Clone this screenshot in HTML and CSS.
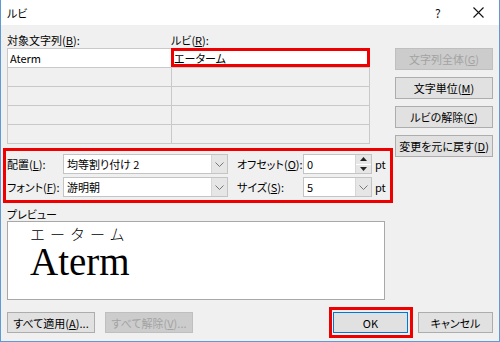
FILE: index.html
```html
<!DOCTYPE html>
<html lang="ja">
<head>
<meta charset="utf-8">
<link rel="stylesheet" href="styles.css">
</head>
<body>
<div class="window">
  <div class="titlebar">
    <span class="title">ルビ</span>
    <span class="help">?</span>
    <span class="close"><svg width="11" height="11" viewBox="0 0 11 11"><path d="M0.5 0.5 L10.5 10.5 M10.5 0.5 L0.5 10.5" stroke="#111" stroke-width="1.1" fill="none"/></svg></span>
  </div>
  <div class="body">
    <div class="main">
      <div class="left">
        <div class="col-labels"><span>対象文字列(<u>B</u>):</span><span>ルビ(<u>R</u>):</span></div>
        <div class="ruby-grid">
          <div class="cell first">Aterm</div><div class="cell first hl">エーターム</div>
          <div class="cell"></div><div class="cell"></div>
          <div class="cell"></div><div class="cell"></div>
          <div class="cell"></div><div class="cell"></div>
          <div class="cell"></div><div class="cell"></div>
        </div>
        <div class="settings">
          <span class="lbl">配置(<u>L</u>):</span>
          <div class="combo"><span class="val">均等割り付け 2</span><span class="drop"><svg width="9" height="5" viewBox="0 0 9 5"><path d="M0.5 0.5 L4.5 4.5 L8.5 0.5" stroke="#777" fill="none"/></svg></span></div>
          <span class="lbl lbl2">オフセット(<u>O</u>):</span>
          <div class="combo"><span class="val">0</span><span class="spinbtns"><span class="sp"><svg width="7" height="4" viewBox="0 0 7 4"><path d="M3.5 0 L7 4 L0 4 Z" fill="#222"/></svg></span><span class="sp"><svg width="7" height="4" viewBox="0 0 7 4"><path d="M0 0 L7 0 L3.5 4 Z" fill="#222"/></svg></span></span></div>
          <span class="pt">pt</span>

          <span class="lbl">フォント(<u>F</u>):</span>
          <div class="combo"><span class="val">游明朝</span><span class="drop"><svg width="9" height="5" viewBox="0 0 9 5"><path d="M0.5 0.5 L4.5 4.5 L8.5 0.5" stroke="#777" fill="none"/></svg></span></div>
          <span class="lbl lbl2">サイズ(<u>S</u>):</span>
          <div class="combo"><span class="val">5</span><span class="drop"><svg width="9" height="5" viewBox="0 0 9 5"><path d="M0.5 0.5 L4.5 4.5 L8.5 0.5" stroke="#777" fill="none"/></svg></span></div>
          <span class="pt">pt</span>
        </div>
        <div class="preview-label">プレビュー</div>
        <div class="preview">
          <div class="ruby-text">エーターム</div>
          <div class="base-text">Aterm</div>
        </div>
      </div>
      <div class="side">
        <button class="btn disabled">文字列全体(<u>G</u>)</button>
        <button class="btn">文字単位(<u>M</u>)</button>
        <button class="btn">ルビの解除(<u>C</u>)</button>
        <button class="btn">変更を元に戻す(<u>D</u>)</button>
      </div>
    </div>
    <div class="footer">
      <button class="btn fbtn">すべて適用(<u>A</u>)...</button>
      <button class="btn fbtn disabled">すべて解除(<u>V</u>)...</button>
      <span class="ok-wrap"><button class="btn okbtn">OK</button></span>
      <button class="btn okbtn">キャンセル</button>
    </div>
  </div>
</div>
</body>
</html>
```
FILE: styles.css
```css
* { box-sizing: border-box; }
body {
  margin: 0;
  font-family: "Noto Sans CJK JP", "Noto Sans", sans-serif;
  font-size: 11px;
  font-feature-settings: "palt";
  color: #000;
}
u { text-decoration: underline; text-underline-offset: 1px; }
.window {
  width: 500px;
  height: 342px;
  background: #f0f0f0;
  border-left: 1px solid #5d9ad6;
  border-right: 1px solid #5d9ad6;
  border-bottom: 1px solid #5d9ad6;
}
.titlebar {
  height: 25px;
  background: #fff;
  display: flex;
  align-items: center;
  padding-left: 6px;
}
.title { flex: 1; font-size: 11px; }
.help { width: 12px; margin-right: 26px; font-size: 12px; color: #111; }
.close { display: flex; margin-right: 15px; }
.body { padding: 0 6px 0 6px; }
.main { display: flex; }
.left { width: 378px; }
.col-labels {
  height: 23px;
  display: grid;
  grid-template-columns: 164px 1fr;
  line-height: 16px;
  padding-top: 7px;
}
.ruby-grid {
  width: 363px;
  display: grid;
  grid-template-columns: 163px 1fr;
  grid-auto-rows: 18px;
  gap: 1px;
  padding: 1px;
  background: #c9c9c9;
}
.cell {
  background: #f0f0f0;
  line-height: 18px;
  padding-left: 2px;
}
.cell.first { background: #fff; }
.hl { position: relative; }
.hl::after {
  content: "";
  position: absolute;
  top: -1px; left: -1px; right: -1px; bottom: 0;
  border: 3px solid #ee0000;
}
.settings {
  margin: 4px -8px 0 -4px;
  border: 3px solid #ee0000;
  padding: 3px 0 3px 1px;
  display: grid;
  grid-template-columns: 56px 165px 75px 69px 1fr;
  grid-template-rows: 20px 20px;
  row-gap: 3px;
  align-items: center;
}
.lbl { line-height: 16px; white-space: nowrap; }
.lbl2 { padding-left: 9px; }
.pt { padding-left: 3px; }
.combo {
  height: 20px;
  background: #fff;
  border: 1px solid #c4c4c4;
  display: flex;
  align-items: stretch;
}
.val { flex: 1; line-height: 18px; padding-left: 3px; }
.drop {
  width: 16px;
  background: #e6e6e6;
  border-left: 1px solid #d6d6d6;
  display: flex;
  align-items: center;
  justify-content: center;
}
.spinbtns {
  width: 16px;
  display: flex;
  flex-direction: column;
  border-left: 1px solid #d6d6d6;
}
.sp {
  flex: 1;
  background: #e6e6e6;
  display: flex;
  align-items: center;
  justify-content: center;
}
.sp + .sp { border-top: 1px solid #fff; }
.preview-label {
  padding-top: 4px;
  height: 18px;
  line-height: 14px;
}
.preview {
  width: 378px;
  height: 79px;
  background: #fff;
  border: 1px solid #a8a8a8;
  padding: 4px 0 0 22px;
}
.ruby-text {
  font-family: "Noto Sans CJK JP", sans-serif;
  font-feature-settings: normal;
  font-weight: 300;
  font-size: 15px;
  line-height: 16px;
  letter-spacing: 5px;
}
.base-text {
  font-family: "Liberation Serif", serif;
  font-size: 39px;
  line-height: 40px;
}
.side {
  margin-left: auto;
  width: 98px;
  padding-top: 23px;
  display: flex;
  flex-direction: column;
  gap: 7px;
}
.btn {
  font-family: "Noto Sans CJK JP", sans-serif;
  font-feature-settings: "palt";
  font-size: 11px;
  height: 22px;
  background: #e1e1e1;
  border: 1px solid #adadad;
  color: #000;
  padding: 0;
  margin: 0;
  line-height: 18px;
  white-space: nowrap;
}
.btn.disabled {
  background: #cccccc;
  border-color: #bfbfbf;
  color: #a3a3a3;
}
.footer {
  margin-top: 7px;
  height: 31px;
  display: flex;
  align-items: center;
}
.fbtn { width: 88px; height: 21px; margin-right: 10px; }
.ok-wrap {
  margin-left: auto;
  border: 3px solid #ee0000;
  padding: 2px 2px 2px 1px;
  margin-right: 5px;
  display: flex;
}
.okbtn { width: 75px; height: 21px; }
.ok-wrap .okbtn { border-color: #0078d7; }
```
